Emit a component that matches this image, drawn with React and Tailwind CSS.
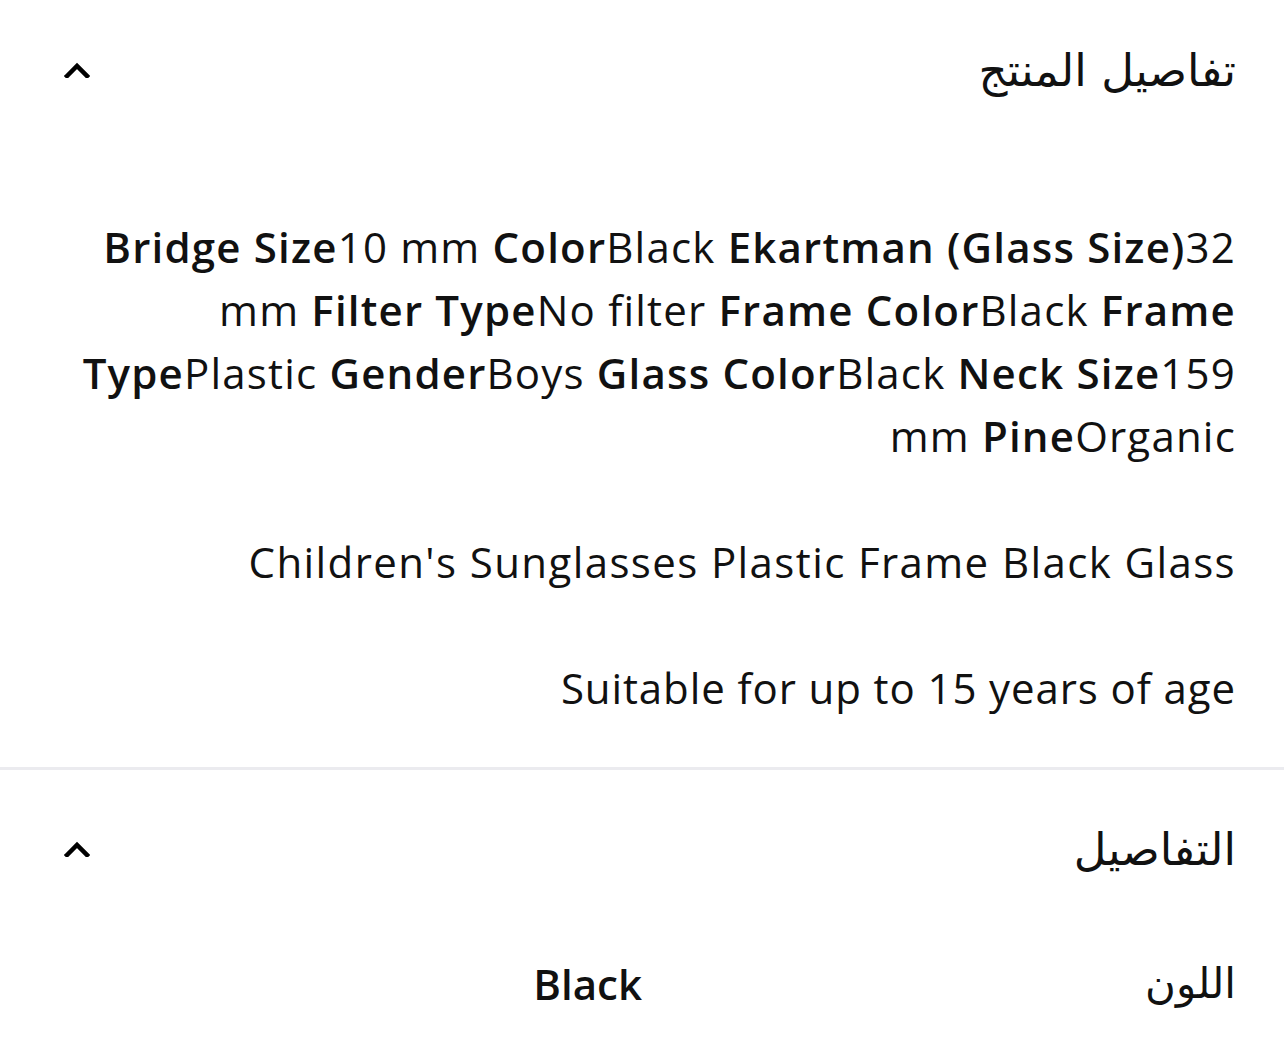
import React from "react";

function Chevron() {
  return (
    <svg width="26" height="16" viewBox="0 0 26 16" className="block">
      <polyline points="3,14 13,4 23,14" fill="none" stroke="#000" strokeWidth="4.5" strokeLinecap="square" strokeLinejoin="miter" />
    </svg>
  );
}

const B = ({ children }) => <span className="font-semibold">{children}</span>;

export default function App() {
  return (
    <div dir="rtl" className="w-[1284px] min-h-[1061px] bg-white text-[#111] overflow-hidden" style={{ fontFamily: '"Open Sans", "DejaVu Sans", sans-serif' }}>
      <section>
        <div className="flex items-center justify-between h-[140px] pr-[48px] pl-[64px]">
          <h2 className="text-[45px] font-normal leading-none" style={{ fontFamily: '"DejaVu Sans", sans-serif' }}>تفاصيل المنتج</h2>
          <Chevron />
        </div>
        <div className="px-[48px] pt-[75px] pb-[48px] text-[42px] leading-[63px] font-medium text-right tracking-[1.2px]">
          <p className="mb-[63px]">
            <B>Bridge Size</B>10 mm <B>Color</B>Black <B>Ekartman (Glass Size)</B>32<br />mm <B>Filter Type</B>No filter <B>Frame Color</B>Black <B>Frame</B><br /><B>Type</B>Plastic <B>Gender</B>Boys <B>Glass Color</B>Black <B>Neck Size</B>159<br />mm <B>Pine</B>Organic
          </p>
          <p className="mb-[63px] tracking-[1.4px]">Children's Sunglasses Plastic Frame Black Glass</p>
          <p className="tracking-[0.9px]">Suitable for up to 15 years of age</p>
        </div>
      </section>
      <div className="border-t-[3px] border-[#ebebef]" />
      <section className="pt-[9px]">
        <div className="flex items-center justify-between h-[140px] pr-[48px] pl-[64px]">
          <h2 className="text-[45px] font-normal leading-none" style={{ fontFamily: '"DejaVu Sans", sans-serif' }}>التفاصيل</h2>
          <Chevron />
        </div>
        <div className="grid grid-cols-2 px-[48px] pt-[33px] text-[42px] leading-[63px]">
          <div style={{ fontFamily: '"DejaVu Sans", sans-serif' }}>اللون</div>
          <div className="font-semibold">Black</div>
        </div>
      </section>
    </div>
  );
}
